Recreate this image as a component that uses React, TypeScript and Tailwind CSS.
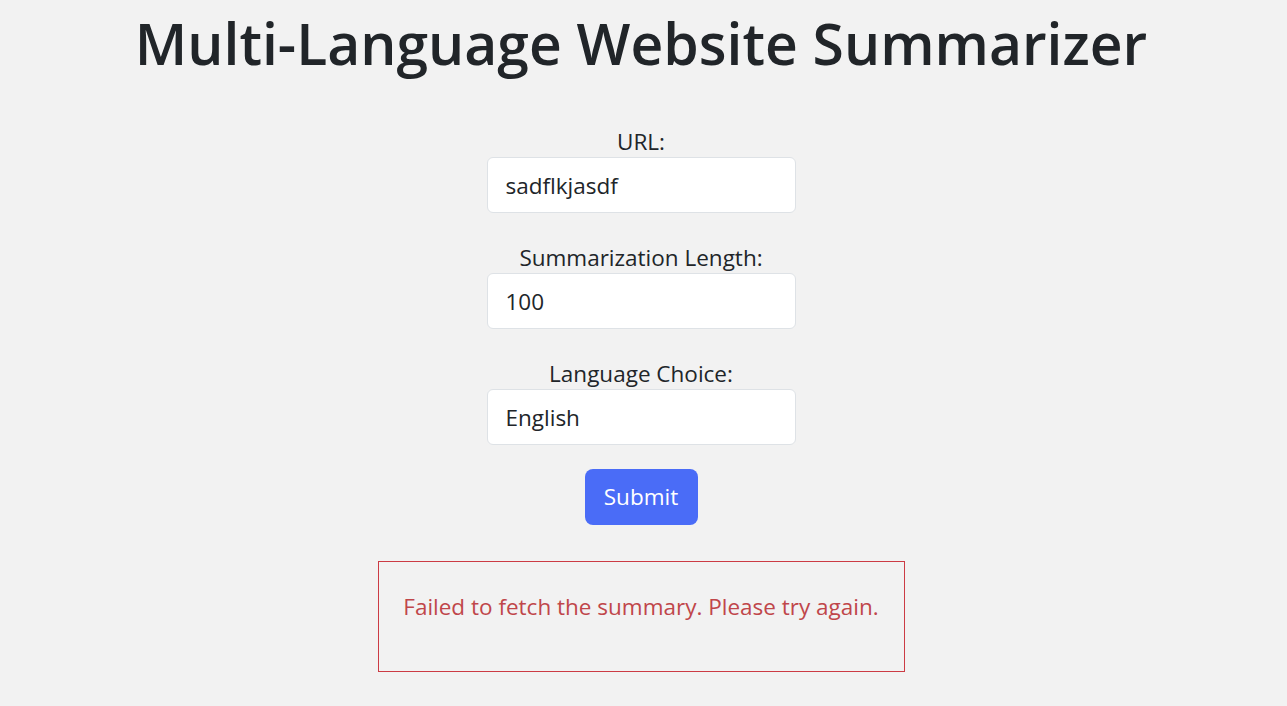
import { useState } from "react";

const fontStack = { fontFamily: '"Open Sans", "Noto Sans", sans-serif' };

function Field({
  label,
  value,
  onChange,
  last,
}: {
  label: string;
  value: string;
  onChange: (v: string) => void;
  last?: boolean;
}) {
  return (
    <div className={`flex flex-col items-center ${last ? "" : "mb-[30px]"}`}>
      <label className="block h-[30px] leading-[30px] text-[22.5px] text-[#212529]">
        {label}
      </label>
      <input
        className="h-[56px] w-[309px] rounded-[6px] border border-[#dee2e6] bg-white px-[18px] text-[22.5px] text-[#212529] outline-none"
        value={value}
        onChange={(e) => onChange(e.target.value)}
      />
    </div>
  );
}

export default function App() {
  const [url, setUrl] = useState("sadflkjasdf");
  const [length, setLength] = useState("100");
  const [lang, setLang] = useState("English");

  return (
    <div
      className="min-h-[706px] w-full bg-[#f2f2f2] flex flex-col items-center pr-[5px]"
      style={fontStack}
    >
      <h1 className="mt-[2px] h-[82px] text-[57px] leading-[82px] font-semibold text-[#212529]">
        Multi-Language Website Summarizer
      </h1>

      <form
        className="mt-[43px] flex flex-col items-center"
        onSubmit={(e) => e.preventDefault()}
      >
        <Field label="URL:" value={url} onChange={setUrl} />
        <Field label="Summarization Length:" value={length} onChange={setLength} />
        <Field label="Language Choice:" value={lang} onChange={setLang} last />
        <button
          type="submit"
          className="mt-[24px] h-[56px] w-[113px] rounded-[8px] bg-[#4a6cf7] text-[22.5px] text-white"
        >
          Submit
        </button>
      </form>

      <div className="mt-[36px] w-[527px] border border-[#cc3b44] px-[20px] pt-[30px] pb-[49px] text-center">
        <p className="h-[30px] leading-[30px] text-[22.5px] text-[#c0464a]">
          Failed to fetch the summary. Please try again.
        </p>
      </div>
    </div>
  );
}
